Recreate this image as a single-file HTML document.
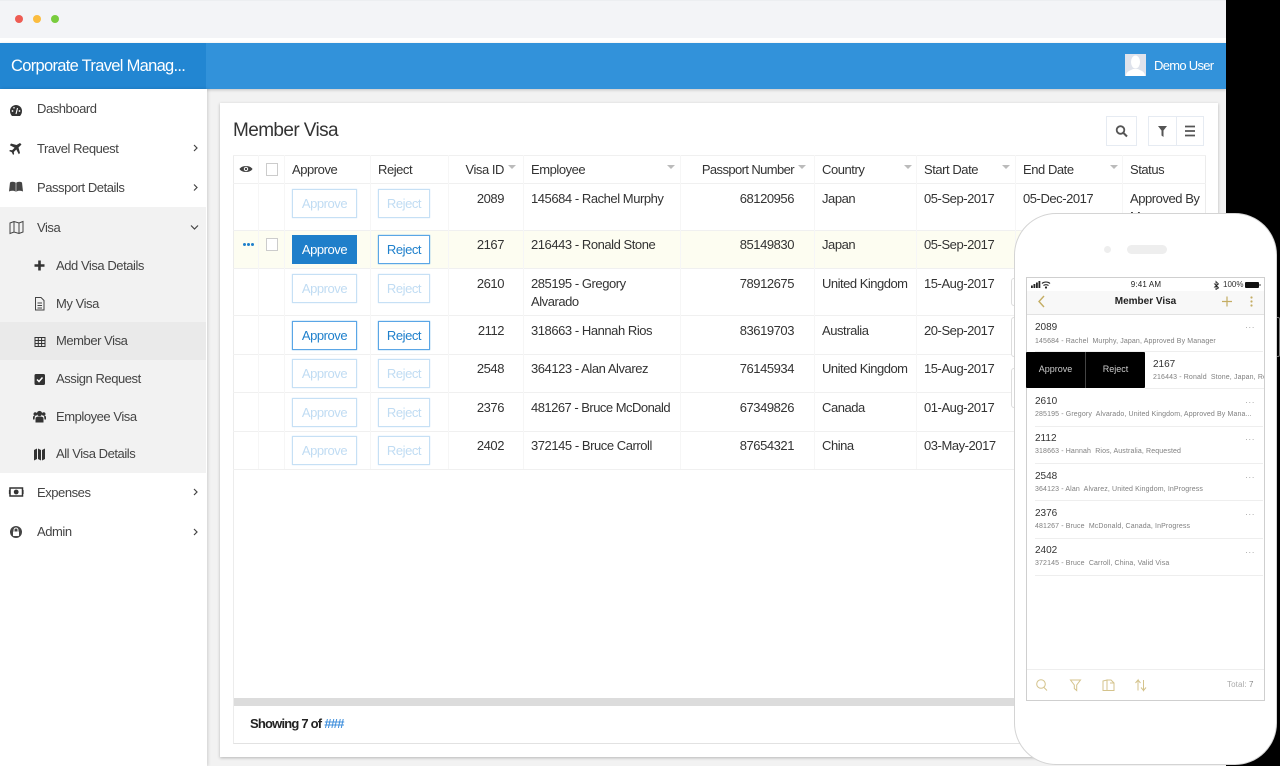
<!DOCTYPE html>
<html><head><meta charset="utf-8"><title>Member Visa</title>
<style>
*{box-sizing:border-box}
html,body{margin:0;padding:0}
body{width:1280px;height:766px;overflow:hidden;background:#000;position:relative;font-family:"Liberation Sans",Arial,sans-serif;color:#333}
div,svg{position:absolute}
.t{font-size:13px;line-height:16px;height:16px;letter-spacing:-.45px;white-space:nowrap;color:#333}
.s{color:#444}
.r{text-align:right}
.w{color:#fff}
.b{font-size:13px;line-height:28px;text-align:center;letter-spacing:-.45px;border:1px solid #c6e0f5;color:#c0dcf3;background:#fff;height:29px;white-space:nowrap;box-shadow:0 0 1px #c6e0f5}
.b.on{border-color:#5aa6e6;color:#1f80cc;box-shadow:0 0 1px #5aa6e6}
.b.fill{background:#1f7fca;border-color:#1f7fca;color:#fff;box-shadow:none}
.h{background:#f0f0f0;height:1px;left:233px;width:973px}
.v{background:#f6f6f6;width:1px;top:155px;height:314px}
.ar{width:0;height:0;border-left:4px solid transparent;border-right:4px solid transparent;border-top:4px solid #bbb;top:165px}
.id{font-size:10px;line-height:12px;height:12px;color:#333;white-space:nowrap;left:1035px}
.sb{font-size:7px;line-height:10px;height:10px;color:#808080;white-space:nowrap;left:1035px;letter-spacing:.13px}
.dot{font-size:9px;line-height:8px;color:#aaa;left:1245px;letter-spacing:.3px}
.pl{height:1px;background:#eee;left:1035px;width:228px}
</style></head><body>

<div style="left:0;top:0;width:1226px;height:766px;background:#f2f2f2"></div>
<div style="left:0;top:0;width:1226px;height:38px;background:#f3f4f7;border-top:1px solid #eceef1"></div>
<div style="left:0;top:38px;width:1226px;height:5px;background:#fff"></div>
<div style="left:15px;top:15px;width:8px;height:8px;border-radius:50%;background:#ee5c54"></div>
<div style="left:33px;top:15px;width:8px;height:8px;border-radius:50%;background:#fbbc3f"></div>
<div style="left:51px;top:15px;width:8px;height:8px;border-radius:50%;background:#79cc3e"></div>

<!-- header -->
<div style="left:0;top:43px;width:1226px;height:46px;background:#3292da;box-shadow:0 1px 3px rgba(0,0,0,.2)"></div>
<div style="left:0;top:43px;width:206px;height:46px;background:#2286d2"></div>
<div class="t w" style="left:11px;top:56px;font-size:16.500px;line-height:20px;height:20px;letter-spacing:-.7px">Corporate Travel Manag...</div>
<div style="left:1125px;top:54px;width:21px;height:22px;background:#dfe3ec;overflow:hidden">
<svg width="21" height="22" style="left:0;top:0"><ellipse cx="10.500" cy="8" rx="4.500" ry="6.500" fill="#fff"/><path d="M1 22c0-5 5-5.500 7-7h5c2 1.500 7 2 7 7z" fill="#fff"/></svg></div>
<div class="t w" style="left:1154px;top:58px;letter-spacing:-.7px">Demo User</div>

<!-- sidebar -->
<div style="left:0;top:89px;width:207px;height:677px;background:#fff;box-shadow:1px 0 3px rgba(0,0,0,.15)"></div>
<div style="left:0;top:207px;width:206px;height:266px;background:#f2f2f2"></div>
<div style="left:0;top:322px;width:206px;height:38px;background:#eaeaea"></div>

<div class="t s" style="left:37px;top:101px">Dashboard</div>
<div class="t s" style="left:37px;top:141px">Travel Request</div>
<div class="t s" style="left:37px;top:180px">Passport Details</div>
<div class="t s" style="left:37px;top:220px">Visa</div>
<div class="t s" style="left:56px;top:258px">Add Visa Details</div>
<div class="t s" style="left:56px;top:296px">My Visa</div>
<div class="t s" style="left:56px;top:333px">Member Visa</div>
<div class="t s" style="left:56px;top:371px">Assign Request</div>
<div class="t s" style="left:56px;top:409px">Employee Visa</div>
<div class="t s" style="left:56px;top:446px">All Visa Details</div>
<div class="t s" style="left:37px;top:485px">Expenses</div>
<div class="t s" style="left:37px;top:524px">Admin</div>

<svg style="left:0;top:89px" width="206" height="460" fill="none" stroke="#444" stroke-width="1.200">
<path d="M194 56l3 3-3 3M194 95.500l3 3-3 3M194 400l3 3-3 3M194 440l3 3-3 3"/>
<path d="M191 136.500l3.500 3.500 3.500-3.500"/>
<!-- dashboard -->
<path d="M10 22a6 6 0 0 1 12 0c0 2-.8 3.800-2 5h-8c-1.200-1.200-2-3-2-5z" fill="#333" stroke="none"/>
<path d="M16 25l1.500-6" stroke="#fff" stroke-width="1.100"/><circle cx="12.500" cy="22" r=".9" fill="#fff" stroke="none"/><circle cx="19.500" cy="22" r=".9" fill="#fff" stroke="none"/><circle cx="14" cy="18.800" r=".8" fill="#fff" stroke="none"/>
<!-- plane -->
<path d="M20 54l1.500 1.500-3 3 1.500 5.500-1.200 1.200-2.500-4.700-2.500 2.500.3 2-1 1-1.300-2.700-2.700-1.300 1-1 2 .3 2.500-2.500-4.700-2.500L11 54.500l5.500 1.500z" fill="#333" stroke="none"/>
<!-- book -->
<path d="M10 93.500c2-1 4-1 6 .5 2-1.500 4-1.500 6-.5l1 9c-2.500-1-5-1-7 .3-2-1.300-4.500-1.300-7-.3z" fill="#444" stroke="none"/>
<path d="M16 94v8.500" stroke="#ddd" stroke-width=".7"/>
<!-- map outline -->
<path d="M10 134l4-1.500 5 1.500 4-1.500v10.500l-4 1.500-5-1.500-4 1.500zM14 132.500v10.500M19 134v10.500" stroke="#444" stroke-width="1"/>
<!-- plus -->
<path d="M39.500 171.500v10M34.500 176.500h10" stroke="#333" stroke-width="2.600"/>
<!-- file -->
<path d="M35.500 208.500h5.500l3 3v9.500h-8.500zM37.500 214h4.500M37.500 216.500h4.500M37.500 219h4.500" stroke="#444" stroke-width="1"/>
<!-- table -->
<path d="M35 248.500h10v9h-10zM35 251.500h10M35 254.500h10M38.300 248.500v9M41.600 248.500v9" stroke="#333" stroke-width="1"/>
<!-- check -->
<rect x="34.500" y="285" width="10.500" height="11" rx="1.500" fill="#333" stroke="none"/><path d="M37 290.500l2 2 3.500-4" stroke="#fff" stroke-width="1.500"/>
<!-- users -->
<g fill="#333" stroke="none"><circle cx="39.500" cy="324.500" r="2.600"/><circle cx="35.300" cy="325" r="1.800"/><circle cx="43.700" cy="325" r="1.800"/><path d="M35.500 333.500v-4c0-1.500 1.500-2 4-2s4 .5 4 2v4z"/><path d="M33 330.500v-2.500c0-1 1-1.200 2-1.200l-.5 3.700zM46 330.500v-2.500c0-1-1-1.200-2-1.200l.5 3.700z"/></g>
<!-- map filled -->
<path d="M34 361l3-1.500v10.500l-3 1.500zM38 359.500l3 1.500v10.500l-3-1.500zM42 361l3-1.500v10.500l-3 1.500z" fill="#333" stroke="none"/>
<!-- money -->
<rect x="10" y="399" width="12.500" height="8" fill="#fff" stroke="#333" stroke-width="1.500"/><circle cx="16.200" cy="403" r="2.400" fill="#333" stroke="none"/><path d="M9.500 401v4M23 401v4" stroke="#333"/>
<!-- lock -->
<circle cx="16" cy="443" r="6" fill="#444" stroke="none"/><rect x="13" y="442.500" width="6" height="4.500" rx=".5" fill="#fff" stroke="none"/><path d="M14 442.500v-1.500a2 2 0 0 1 4 0v1.500" stroke="#fff" stroke-width="1"/>
</svg>

<!-- card -->
<div style="left:220px;top:103px;width:998px;height:654px;background:#fff;box-shadow:0 1px 3px rgba(0,0,0,.25)"></div>
<div class="t" style="left:233px;top:119px;font-size:19px;line-height:24px;height:24px;letter-spacing:-.6px">Member Visa</div>

<div style="left:1106px;top:116px;width:31px;height:30px;border:1px solid #e6ebf2"></div>
<div style="left:1148px;top:116px;width:56px;height:30px;border:1px solid #e6ebf2"></div>
<div style="left:1176px;top:116px;width:1px;height:30px;background:#e6ebf2"></div>
<svg style="left:1100px;top:116px" width="110" height="30" fill="none" stroke="#555">
<circle cx="20.500" cy="14" r="3.800" stroke-width="1.800"/><path d="M23.500 17l3.500 3.500" stroke-width="2"/>
<path d="M58 10h9l-3.500 4.500V21l-2-1.500v-5z" fill="#555" stroke="none"/>
<path d="M85 10.500h10M85 15h10M85 19.500h10" stroke-width="1.700"/>
</svg>

<!-- table frame -->
<div style="left:233px;top:155px;width:973px;height:589px;border:1px solid #ececec;border-bottom-color:#e2e2e2"></div>
<div style="left:234px;top:231px;width:971px;height:37px;background:#fdfdf1"></div>
<div class="h" style="top:155px"></div><div class="h" style="top:183px"></div><div class="h" style="top:230px"></div><div class="h" style="top:268px"></div><div class="h" style="top:315px"></div><div class="h" style="top:354px"></div><div class="h" style="top:392px"></div><div class="h" style="top:431px"></div><div class="h" style="top:469px"></div>
<div class="v" style="left:258px"></div><div class="v" style="left:284px"></div><div class="v" style="left:370px"></div><div class="v" style="left:448px"></div><div class="v" style="left:523px"></div><div class="v" style="left:680px"></div><div class="v" style="left:814px"></div><div class="v" style="left:916px"></div><div class="v" style="left:1015px"></div><div class="v" style="left:1122px"></div>

<svg style="left:239px;top:163px" width="14" height="12"><path d="M.5 6C3 2 11 2 13.500 6 11 10 3 10 .5 6z" fill="#444"/><circle cx="7" cy="6" r="2.200" fill="#fff"/><circle cx="7" cy="6" r="1.200" fill="#444"/></svg>
<div style="left:266px;top:163px;width:12px;height:13px;border:1px solid #ccc;background:#fff"></div>
<div style="left:266px;top:238px;width:12px;height:13px;border:1px solid #ccc;background:#fff"></div>
<div style="left:243px;top:243px;width:3px;height:3px;border-radius:50%;background:#1f80cc;box-shadow:4px 0 0 #1f80cc,8px 0 0 #1f80cc"></div>

<!-- header labels -->
<div class="t" style="left:292px;top:162px">Approve</div>
<div class="t" style="left:378px;top:162px">Reject</div>
<div class="t r" style="left:440px;width:64px;top:162px">Visa ID</div>
<div class="t" style="left:531px;top:162px">Employee</div>
<div class="t r" style="left:684px;width:110px;top:162px;letter-spacing:-.6px">Passport Number</div>
<div class="t" style="left:822px;top:162px">Country</div>
<div class="t" style="left:924px;top:162px">Start Date</div>
<div class="t" style="left:1023px;top:162px">End Date</div>
<div class="t" style="left:1130px;top:162px">Status</div>
<div class="ar" style="left:508px"></div><div class="ar" style="left:667px"></div><div class="ar" style="left:798px"></div><div class="ar" style="left:904px"></div><div class="ar" style="left:1002px"></div><div class="ar" style="left:1110px"></div>

<!-- buttons -->
<div class="b" style="left:292px;top:189px;width:65px">Approve</div><div class="b" style="left:378px;top:189px;width:52px">Reject</div>
<div class="b fill" style="left:292px;top:235px;width:65px">Approve</div><div class="b on" style="left:378px;top:235px;width:52px">Reject</div>
<div class="b" style="left:292px;top:274px;width:65px">Approve</div><div class="b" style="left:378px;top:274px;width:52px">Reject</div>
<div class="b on" style="left:292px;top:321px;width:65px">Approve</div><div class="b on" style="left:378px;top:321px;width:52px">Reject</div>
<div class="b" style="left:292px;top:359px;width:65px">Approve</div><div class="b" style="left:378px;top:359px;width:52px">Reject</div>
<div class="b" style="left:292px;top:398px;width:65px">Approve</div><div class="b" style="left:378px;top:398px;width:52px">Reject</div>
<div class="b" style="left:292px;top:436px;width:65px">Approve</div><div class="b" style="left:378px;top:436px;width:52px">Reject</div>

<!-- rows -->
<div class="t r" style="left:440px;width:64px;top:191px">2089</div><div class="t" style="left:531px;top:191px">145684 - Rachel Murphy</div><div class="t r" style="left:684px;width:110px;top:191px">68120956</div><div class="t" style="left:822px;top:191px">Japan</div><div class="t" style="left:924px;top:191px">05-Sep-2017</div><div class="t" style="left:1023px;top:191px">05-Dec-2017</div><div class="t" style="left:1130px;top:191px">Approved By</div><div class="t" style="left:1130px;top:209px">Manager</div>
<div class="t r" style="left:440px;width:64px;top:237px">2167</div><div class="t" style="left:531px;top:237px">216443 - Ronald Stone</div><div class="t r" style="left:684px;width:110px;top:237px">85149830</div><div class="t" style="left:822px;top:237px">Japan</div><div class="t" style="left:924px;top:237px">05-Sep-2017</div>
<div class="t r" style="left:440px;width:64px;top:276px">2610</div><div class="t" style="left:531px;top:276px">285195 - Gregory</div><div class="t" style="left:531px;top:294px">Alvarado</div><div class="t r" style="left:684px;width:110px;top:276px">78912675</div><div class="t" style="left:822px;top:276px;letter-spacing:-.5px">United Kingdom</div><div class="t" style="left:924px;top:276px">15-Aug-2017</div>
<div class="t r" style="left:440px;width:64px;top:323px">2112</div><div class="t" style="left:531px;top:323px">318663 - Hannah Rios</div><div class="t r" style="left:684px;width:110px;top:323px">83619703</div><div class="t" style="left:822px;top:323px">Australia</div><div class="t" style="left:924px;top:323px">20-Sep-2017</div>
<div class="t r" style="left:440px;width:64px;top:361px">2548</div><div class="t" style="left:531px;top:361px">364123 - Alan Alvarez</div><div class="t r" style="left:684px;width:110px;top:361px">76145934</div><div class="t" style="left:822px;top:361px;letter-spacing:-.5px">United Kingdom</div><div class="t" style="left:924px;top:361px">15-Aug-2017</div>
<div class="t r" style="left:440px;width:64px;top:400px">2376</div><div class="t" style="left:531px;top:400px;letter-spacing:-.52px">481267 - Bruce McDonald</div><div class="t r" style="left:684px;width:110px;top:400px">67349826</div><div class="t" style="left:822px;top:400px">Canada</div><div class="t" style="left:924px;top:400px">01-Aug-2017</div>
<div class="t r" style="left:440px;width:64px;top:438px">2402</div><div class="t" style="left:531px;top:438px">372145 - Bruce Carroll</div><div class="t r" style="left:684px;width:110px;top:438px">87654321</div><div class="t" style="left:822px;top:438px">China</div><div class="t" style="left:924px;top:438px">03-May-2017</div>

<!-- footer of table -->
<div style="left:234px;top:698px;width:971px;height:8px;background:#dcdcdc"></div>
<div class="t" style="left:250px;top:716px;font-weight:bold;letter-spacing:-.8px;color:#222">Showing 7 of <span style="color:#3f8fdc;font-style:italic">###</span></div>

<!-- slivers behind the phone -->
<div style="left:1011px;top:278px;width:6px;height:28px;border:1px solid #ddd;border-radius:3px 0 0 3px;background:#fff"></div>
<div style="left:1011px;top:317px;width:6px;height:40px;border:1px solid #ddd;border-radius:3px 0 0 3px;background:#fff"></div>
<div style="left:1011px;top:368px;width:6px;height:40px;border:1px solid #ddd;border-radius:3px 0 0 3px;background:#fff"></div>
<div style="left:1275px;top:317px;width:5px;height:40px;border:1px solid #777;border-left:0;border-radius:0 2px 2px 0"></div>

<!-- phone -->
<div style="left:1014px;top:213px;width:263px;height:552px;background:#fff;border:1px solid #d4d4d4;border-radius:42px"></div>
<div style="left:1104px;top:246px;width:7px;height:7px;border-radius:50%;background:#eee"></div>
<div style="left:1127px;top:245px;width:40px;height:9px;border-radius:5px;background:#eee"></div>
<div style="left:1026px;top:277px;width:239px;height:424px;border:1px solid #cfcfcf;background:#fff;overflow:hidden"></div>
<div style="left:1027px;top:291px;width:237px;height:24px;background:#f8f8f8;border-bottom:1px solid #e2e2e2"></div>

<svg style="left:1030px;top:280px" width="232" height="10">
<g fill="#222"><rect x="1" y="5.500" width="1.800" height="2.500"/><rect x="3.500" y="4" width="1.800" height="4"/><rect x="6" y="2.500" width="1.800" height="5.500"/><rect x="8.500" y="1" width="1.800" height="7"/></g>
<path d="M12 3.500c2-2 6-2 8 0M13.500 5.500c1.500-1 3.500-1 5 0" stroke="#222" fill="none" stroke-width="1.100"/><circle cx="16" cy="7.500" r="1.100" fill="#222"/>
<path d="M186 1.500l2.500 2.500-2.500 2 2.500 2-2.500 1.500v-8zM184 3.500l4.500 4M184 7.500l4.500-4" stroke="#222" stroke-width=".8" fill="none"/>
<rect x="215" y="2" width="14" height="6" rx="1" fill="#111"/><rect x="229.500" y="4" width="1" height="2" fill="#444"/>
</svg>
<div class="t" style="left:1128px;top:279px;font-size:8px;line-height:12px;height:12px;letter-spacing:.15px;width:36px;text-align:center;color:#222">9:41 AM</div>
<div class="t" style="left:1223px;top:279px;font-size:8px;line-height:12px;height:12px;letter-spacing:0;color:#333">100%</div>

<div class="t" style="left:1104px;top:295px;width:83px;text-align:center;font-size:10px;line-height:13px;font-weight:bold;letter-spacing:0;color:#222">Member Visa</div>
<svg style="left:1030px;top:291px" width="232" height="24" fill="none" stroke="#c4ad63" stroke-width="1.200">
<path d="M14 5l-5 5.500 5 5.500" stroke-width="1.400"/>
<path d="M197 5.500v10M192 10.500h10"/>
<g fill="#c4ad63" stroke="none"><circle cx="221.500" cy="6.500" r="1.100"/><circle cx="221.500" cy="10.500" r="1.100"/><circle cx="221.500" cy="14.500" r="1.100"/></g>
</svg>

<!-- phone list -->
<div class="id" style="top:322px">2089</div><div class="sb" style="top:337px">145684 - Rachel&nbsp; Murphy, Japan, Approved By Manager</div><div class="dot" style="top:323px">···</div><div class="pl" style="top:351px"></div>
<div style="left:1026px;top:352px;width:119px;height:36px;background:#000;border-radius:1px"></div>
<div style="left:1085px;top:352px;width:1px;height:36px;background:#444"></div>
<div style="left:1026px;top:363px;width:59px;text-align:center;font-size:9px;line-height:13px;color:#ccc">Approve</div>
<div style="left:1086px;top:363px;width:59px;text-align:center;font-size:9px;line-height:13px;color:#ccc">Reject</div>
<div class="id" style="left:1153px;top:359px">2167</div>
<div style="left:1153px;top:373px;width:111px;height:10px;overflow:hidden"><div class="sb" style="left:0;top:0">216443 - Ronald&nbsp; Stone, Japan, Requested</div></div>
<div class="pl" style="top:388px;left:1145px;width:119px"></div>
<div class="id" style="top:396px">2610</div><div class="sb" style="top:410px">285195 - Gregory&nbsp; Alvarado, United Kingdom, Approved By Mana...</div><div class="dot" style="top:398px">···</div><div class="pl" style="top:426px"></div>
<div class="id" style="top:433px">2112</div><div class="sb" style="top:447px">318663 - Hannah&nbsp; Rios, Australia, Requested</div><div class="dot" style="top:435px">···</div><div class="pl" style="top:463px"></div>
<div class="id" style="top:471px">2548</div><div class="sb" style="top:485px">364123 - Alan&nbsp; Alvarez, United Kingdom, InProgress</div><div class="dot" style="top:473px">···</div><div class="pl" style="top:500px"></div>
<div class="id" style="top:508px">2376</div><div class="sb" style="top:522px">481267 - Bruce&nbsp; McDonald, Canada, InProgress</div><div class="dot" style="top:510px">···</div><div class="pl" style="top:538px"></div>
<div class="id" style="top:545px">2402</div><div class="sb" style="top:559px">372145 - Bruce&nbsp; Carroll, China, Valid Visa</div><div class="dot" style="top:548px">···</div><div class="pl" style="top:575px"></div>

<!-- phone toolbar -->
<div style="left:1027px;top:669px;width:237px;height:1px;background:#eee"></div>
<svg style="left:1030px;top:675px" width="125" height="20" fill="none" stroke="#d4c38c" stroke-width="1">
<circle cx="11" cy="9" r="4.300"/><path d="M14 12.500l3 3"/>
<path d="M40.500 5h10l-3.800 5v5.500l-2.400-2v-3.500z"/>
<path d="M73 6l4-1v10.500h-4zM77 5h4l3 3v7.500h-7zM80 8h4" />
<path d="M108 15.500V5l-2.500 3M108 5l2.500 3M113.500 5v10.500l-2.500-3M113.500 15.500l2.500-3"/>
</svg>
<div class="t" style="left:1227px;top:677px;font-size:8px;letter-spacing:.1px;color:#aaa">Total: <span style="color:#888">7</span></div>

</body></html>
